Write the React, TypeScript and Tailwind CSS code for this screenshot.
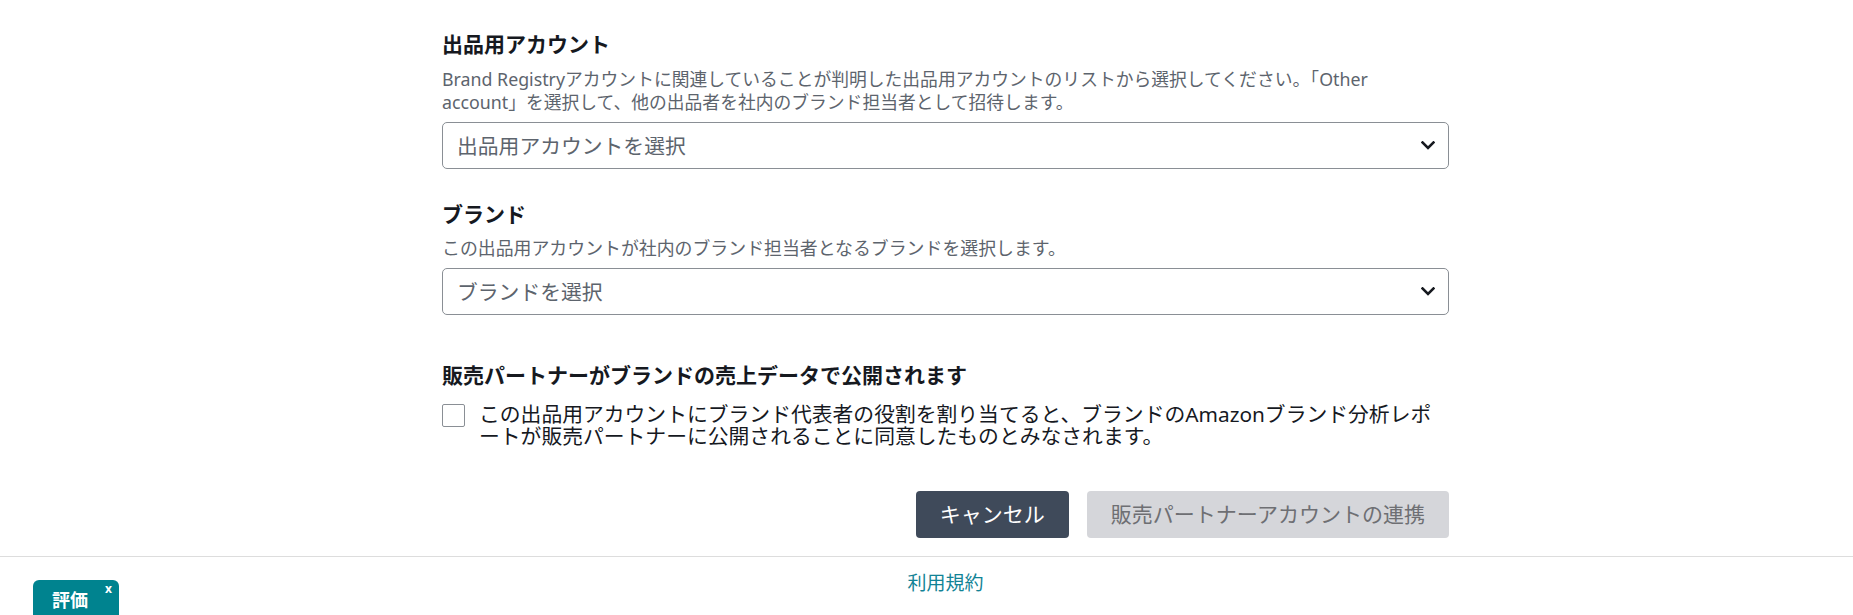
import React from "react";

function Chevron() {
  return (
    <svg width="14" height="9" viewBox="0 0 14 9" fill="none" className="shrink-0">
      <path d="M1.5 1.5 L7 7 L12.5 1.5" stroke="#16191f" strokeWidth="2.6" strokeLinecap="square" strokeLinejoin="miter" />
    </svg>
  );
}

function Select({ label, className }: { label: string; className: string }) {
  return (
    <div
      className={
        "flex h-[47px] w-full items-center justify-between rounded-[5px] border border-[#8a8f95] bg-white pl-[14px] pr-[13px] " +
        className
      }
    >
      <span className="text-[20.8px] leading-[26px] text-[#5d646d]">{label}</span>
      <Chevron />
    </div>
  );
}

export default function App() {
  return (
    <div className="relative min-h-[615px] overflow-hidden bg-white font-['Noto_Sans','Noto_Sans_CJK_JP',sans-serif]">
      <div className="pl-[442px] pt-[31px]">
        <div className="w-[1007px]">
          <h2 className="text-[21px] font-bold leading-[26px] text-[#16191f]">出品用アカウント</h2>
          <p className="mt-[11px] text-[17.8px] leading-[23px] text-[#5d646d]">
            Brand Registryアカウントに関連していることが判明した出品用アカウントのリストから選択してください。「Other
            <br />
            account」を選択して、他の出品者を社内のブランド担当者として招待します。
          </p>
          <Select className="mt-[8px]" label="出品用アカウントを選択" />

          <h2 className="mt-[32px] text-[21px] font-bold leading-[26px] text-[#16191f]">ブランド</h2>
          <p className="mt-[10px] text-[17.9px] leading-[23px] text-[#5d646d]">
            この出品用アカウントが社内のブランド担当者となるブランドを選択します。
          </p>
          <Select className="mt-[8px]" label="ブランドを選択" />

          <h2 className="mt-[47px] text-[21px] font-bold leading-[26px] text-[#16191f]">
            販売パートナーがブランドの売上データで公開されます
          </h2>
          <div className="mt-[15px] flex gap-[14px]">
            <span className="mt-[1px] h-[23px] w-[23px] shrink-0 rounded-[2px] border border-[#8a8f95] bg-white" />
            <p className="text-[20.8px] leading-[22px] text-[#16191f]">
              この出品用アカウントにブランド代表者の役割を割り当てると、ブランドのAmazonブランド分析レポートが販売パートナーに公開されることに同意したものとみなされます。
            </p>
          </div>

          <div className="mt-[44px] flex justify-end gap-[18px]">
            <button className="h-[47px] rounded-[4px] bg-[#3f4a5a] px-[24px] text-[21px] text-white">キャンセル</button>
            <button className="h-[47px] rounded-[4px] bg-[#d5d6da] px-[24px] text-[21px] text-[#6e6f73]">
              販売パートナーアカウントの連携
            </button>
          </div>
        </div>
      </div>

      <div className="mt-[18px] border-t border-[#dddddd] pl-[442px]">
        <div className="flex w-[1007px] justify-center pt-[14px]">
          <a className="text-[19px] leading-[24px] text-[#128396]">利用規約</a>
        </div>
      </div>

      <div className="absolute left-[33px] top-[580px] h-[45px] w-[86px] rounded-t-[6px] bg-[#00838f]">
        <span className="absolute left-[19px] top-[9px] text-[18px] font-bold leading-[22px] text-white">評価</span>
        <span className="absolute left-[72px] top-[2px] text-[12px] font-bold leading-[14px] text-white">x</span>
      </div>
    </div>
  );
}
